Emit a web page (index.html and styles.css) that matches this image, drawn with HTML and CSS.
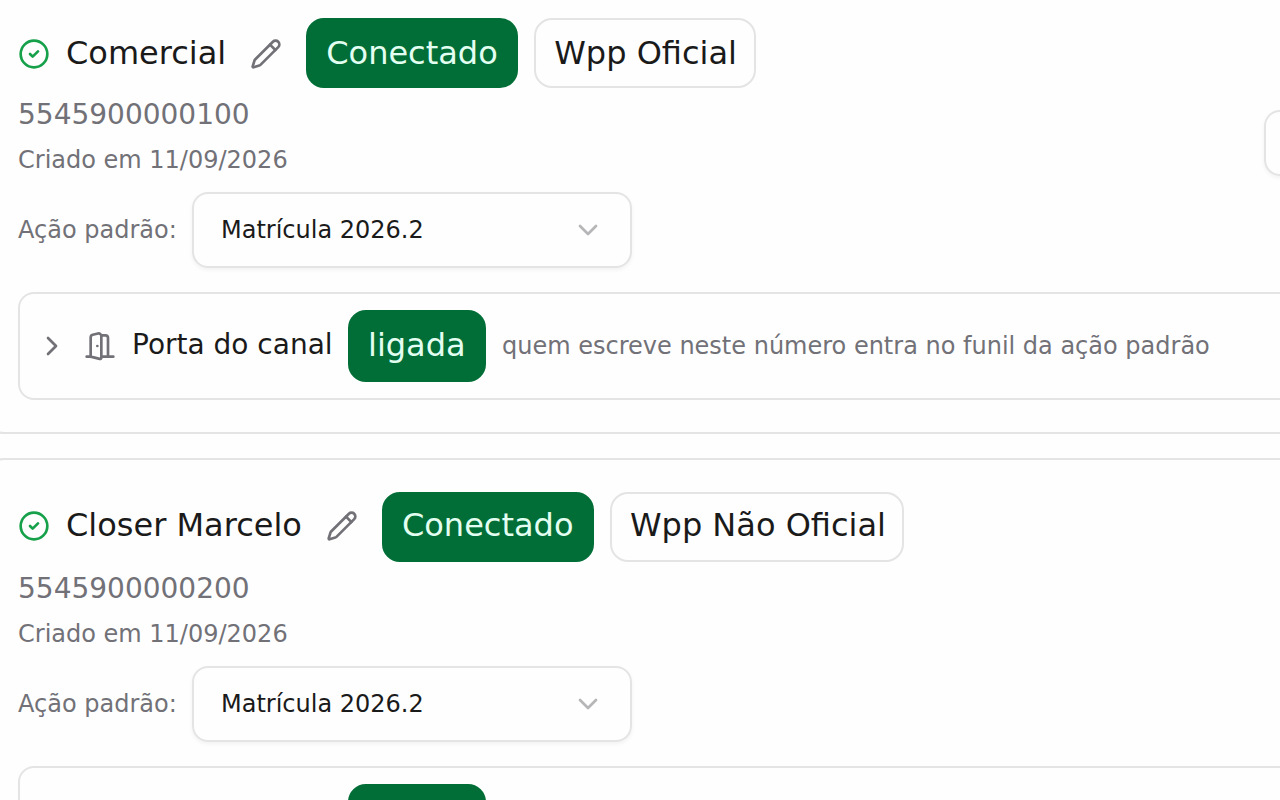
FILE: index.html
```
<!DOCTYPE html>
<html lang="pt-BR">
  <head>
    <meta charset="utf-8">
    <title>Canais</title>
    <link rel="stylesheet" href="styles.css">
  </head>
  <body>
    <svg class="sprite">
      <symbol id="circle-check" viewBox="0 0 24 24"><circle cx="12" cy="12" r="10"/><path d="m9 12 2 2 4-4"/></symbol>
      <symbol id="pencil" viewBox="0 0 24 24"><path d="M21.174 6.812a1 1 0 0 0-3.986-3.987L3.842 16.174a2 2 0 0 0-.5.83l-1.321 4.352a.5.5 0 0 0 .623.622l4.353-1.32a2 2 0 0 0 .83-.497z"/><path d="m15 5 4 4"/></symbol>
      <symbol id="chevron-down" viewBox="0 0 24 24"><path d="m6 9 6 6 6-6"/></symbol>
      <symbol id="chevron-right" viewBox="0 0 24 24"><path d="m9 18 6-6-6-6"/></symbol>
      <symbol id="door-open" viewBox="0 0 24 24"><path d="M13 4h3a2 2 0 0 1 2 2v14"/><path d="M2 20h3"/><path d="M13 20h9"/><path d="M10 12v.01"/><path d="M13 4.562v16.157a1 1 0 0 1-1.242.97L5 20V5.562a2 2 0 0 1 1.515-1.94l4-1A2 2 0 0 1 13 4.561Z"/></symbol>
    </svg>
    <main class="channels">
      <section class="card">
        <div class="card-top">
          <div class="info">
            <div class="title-row">
              <svg class="icon icon-ok"><use href="#circle-check"/></svg>
              <span class="name">Comercial</span>
              <button class="edit"><svg class="icon"><use href="#pencil"/></svg></button>
              <span class="badge badge-green status">Conectado</span>
              <span class="badge official">Wpp Oficial</span>
            </div>
            <p class="phone">5545900000100</p>
            <p class="created">Criado em 11/09/2026</p>
            <div class="action-row">
              <span class="label">Ação padrão:</span>
              <button class="select">
                <span>Matrícula 2026.2</span>
                <svg class="icon"><use href="#chevron-down"/></svg>
              </button>
            </div>
          </div>
          <button class="side-button"></button>
        </div>
        <div class="door">
          <svg class="icon"><use href="#chevron-right"/></svg>
          <svg class="icon"><use href="#door-open"/></svg>
          <span class="door-title">Porta do canal</span>
          <span class="badge badge-green">ligada</span>
          <span class="hint">quem escreve neste número entra no funil da ação padrão</span>
        </div>
      </section>

      <section class="card">
        <div class="card-top">
          <div class="info">
            <div class="title-row title-row-raised">
              <svg class="icon icon-ok"><use href="#circle-check"/></svg>
              <span class="name">Closer Marcelo</span>
              <button class="edit"><svg class="icon"><use href="#pencil"/></svg></button>
              <span class="badge badge-green status">Conectado</span>
              <span class="badge unofficial">Wpp Não Oficial</span>
            </div>
            <p class="phone">5545900000200</p>
            <p class="created">Criado em 11/09/2026</p>
            <div class="action-row">
              <span class="label">Ação padrão:</span>
              <button class="select">
                <span>Matrícula 2026.2</span>
                <svg class="icon"><use href="#chevron-down"/></svg>
              </button>
            </div>
          </div>
        </div>
        <div class="door">
          <svg class="icon"><use href="#chevron-right"/></svg>
          <svg class="icon"><use href="#door-open"/></svg>
          <span class="door-title">Porta do canal</span>
          <span class="badge badge-green">ligada</span>
          <span class="hint">quem escreve neste número entra no funil da ação padrão</span>
        </div>
      </section>
    </main>
  </body>
</html>
```
FILE: styles.css
```
* {
  box-sizing: border-box;
}
body {
  height: 100vh;
  margin: 0;
  overflow: hidden;
  background: #fefefe;
  color: #1a1a1a;
  font-family: "DejaVu Sans", sans-serif;
}
p {
  margin: 0;
}
button {
  font: inherit;
  color: inherit;
  background: none;
  border: 0;
}
.sprite {
  display: none;
}
.channels {
  display: flex;
  flex-direction: column;
  gap: 24px;
  width: 1400px;
  margin: -16px 0 0 -16px;
}
.card {
  display: flex;
  flex-direction: column;
  gap: 24px;
  height: 450px;
  padding: 32px;
  border: 2px solid #e4e4e5;
  border-radius: 20px;
}
.card-top {
  display: flex;
  align-items: center;
  justify-content: space-between;
}
.title-row {
  display: flex;
  align-items: center;
  gap: 16px;
  height: 70px;
  margin-bottom: 7px;
}
.icon {
  flex-shrink: 0;
  width: 32px;
  height: 32px;
  fill: none;
  stroke: #717177;
  stroke-width: 2;
  stroke-linecap: round;
  stroke-linejoin: round;
}
.icon-ok {
  margin-top: 2px;
  stroke: #16a04a;
}
.name {
  font-size: 32px;
}
.edit {
  display: flex;
  margin-top: 2px;
  padding: 8px;
}
.badge {
  display: flex;
  align-items: center;
  height: 70px;
  padding: 0 18px;
  border: 2px solid #e4e4e5;
  border-radius: 18px;
  font-size: 32px;
  white-space: nowrap;
}
.badge-green {
  background: #016e37;
  border-color: #016e37;
  color: #e3fff1;
}
.status {
  width: 212px;
}
.official {
  width: 222px;
}
.unofficial {
  width: 294px;
}
.title-row-raised .name,
.title-row-raised .badge {
  padding-bottom: 4px;
}
.title-row-raised .icon-ok,
.title-row-raised .edit {
  margin-top: 0;
  margin-bottom: 2px;
}
.phone {
  margin-bottom: 9px;
  color: #717177;
  font-size: 28px;
  line-height: 40px;
}
.created {
  margin-bottom: 16px;
  color: #717177;
  font-size: 24px;
  line-height: 32px;
}
.action-row {
  display: flex;
  align-items: center;
  gap: 16px;
}
.label,
.hint {
  color: #717177;
  font-size: 24px;
  white-space: nowrap;
}
.label {
  width: 158px;
}
.select {
  display: flex;
  align-items: center;
  justify-content: space-between;
  width: 440px;
  height: 76px;
  padding: 0 26px 0 27px;
  border: 2px solid #e4e4e5;
  border-radius: 16px;
  box-shadow: 0 2px 4px rgba(0, 0, 0, 0.05);
  font-size: 24px;
}
.select .icon {
  opacity: 0.5;
}
.side-button {
  width: 86px;
  height: 66px;
  border: 2px solid #e4e4e5;
  border-radius: 16px;
  box-shadow: 0 2px 4px rgba(0, 0, 0, 0.05);
}
.door {
  display: flex;
  align-items: center;
  gap: 16px;
  height: 108px;
  padding: 16px;
  border: 2px solid #e4e4e5;
  border-radius: 16px;
}
.door .badge {
  width: 138px;
  height: 72px;
  padding-bottom: 2px;
}
.door-title {
  width: 200px;
  padding-bottom: 3px;
  font-size: 28px;
  white-space: nowrap;
}
```
